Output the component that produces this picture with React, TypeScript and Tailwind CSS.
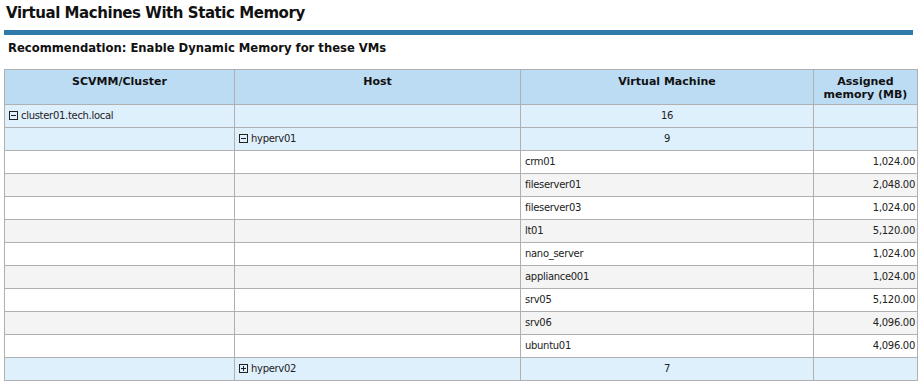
import React from "react";

type Row =
  | { kind: "cluster"; name: string; count: number }
  | { kind: "host"; name: string; count: number; open: boolean }
  | { kind: "vm"; name: string; mem: string };

const rows: Row[] = [
  { kind: "cluster", name: "cluster01.tech.local", count: 16 },
  { kind: "host", name: "hyperv01", count: 9, open: true },
  { kind: "vm", name: "crm01", mem: "1,024.00" },
  { kind: "vm", name: "fileserver01", mem: "2,048.00" },
  { kind: "vm", name: "fileserver03", mem: "1,024.00" },
  { kind: "vm", name: "lt01", mem: "5,120.00" },
  { kind: "vm", name: "nano_server", mem: "1,024.00" },
  { kind: "vm", name: "appliance001", mem: "1,024.00" },
  { kind: "vm", name: "srv05", mem: "5,120.00" },
  { kind: "vm", name: "srv06", mem: "4,096.00" },
  { kind: "vm", name: "ubuntu01", mem: "4,096.00" },
  { kind: "host", name: "hyperv02", count: 7, open: false },
];

function Toggle({ open }: { open: boolean }) {
  return (
    <svg width="9" height="9" viewBox="0 0 9 9" className="inline-block mr-[3px] align-[-1px]">
      <rect x="0.5" y="0.5" width="8" height="8" fill="none" stroke="#222" />
      <path d="M2 4.5h5" stroke="#222" />
      {!open && <path d="M4.5 2v5" stroke="#222" />}
    </svg>
  );
}

const cell = "border border-[#b0b0b0] h-[23px] px-[4px] py-0 align-middle";

export default function App() {
  let vmIndex = 0;
  return (
    <div className="w-[923px] h-[385px] bg-white text-[#222] font-['DejaVu_Sans',Verdana,sans-serif] overflow-hidden">
      <h1 className="pl-[6px] pt-[3px] text-[15px] leading-[20px] font-bold text-[#111] tracking-[-0.45px]">
        Virtual Machines With Static Memory
      </h1>
      <div className="mx-[4px] mt-[7px] w-[909px] h-[5px] bg-[#2e7bab]" />
      <p className="pl-[8px] mt-[6px] text-[11.6px] leading-[14px] font-bold text-[#111]">
        Recommendation: Enable Dynamic Memory for these VMs
      </p>
      <table className="ml-[4px] mt-[14px] w-[914px] border-collapse table-fixed text-[10px] leading-[12px] tracking-[-0.3px]">
        <colgroup>
          <col className="w-[230px]" />
          <col className="w-[286px]" />
          <col className="w-[293px]" />
          <col className="w-[104px]" />
        </colgroup>
        <thead>
          <tr className="bg-[#bcdcf4] text-[11px] font-bold text-[#111] tracking-normal">
            <th className="border border-[#b0b0b0] h-[35px] align-top pt-[5px] leading-[13px]">SCVMM/Cluster</th>
            <th className="border border-[#b0b0b0] align-top pt-[5px] leading-[13px]">Host</th>
            <th className="border border-[#b0b0b0] align-top pt-[5px] leading-[13px]">Virtual Machine</th>
            <th className="border border-[#b0b0b0] align-top pt-[5px] leading-[13px]">
              Assigned
              <br />
              memory (MB)
            </th>
          </tr>
        </thead>
        <tbody>
          {rows.map((r, i) => {
            if (r.kind === "cluster") {
              return (
                <tr key={i} className="bg-[#dff0fd]">
                  <td className={cell}>
                    <Toggle open />
                    {r.name}
                  </td>
                  <td className={cell} />
                  <td className={`${cell} text-center`}>{r.count}</td>
                  <td className={cell} />
                </tr>
              );
            }
            if (r.kind === "host") {
              return (
                <tr key={i} className="bg-[#dff0fd]">
                  <td className={cell} />
                  <td className={cell}>
                    <Toggle open={r.open} />
                    {r.name}
                  </td>
                  <td className={`${cell} text-center`}>{r.count}</td>
                  <td className={cell} />
                </tr>
              );
            }
            const stripe = vmIndex++ % 2 === 1 ? "bg-[#f4f4f4]" : "bg-white";
            return (
              <tr key={i} className={stripe}>
                <td className={cell} />
                <td className={cell} />
                <td className={cell}>{r.name}</td>
                <td className={`${cell} text-right pr-[2px]`}>{r.mem}</td>
              </tr>
            );
          })}
        </tbody>
      </table>
    </div>
  );
}
